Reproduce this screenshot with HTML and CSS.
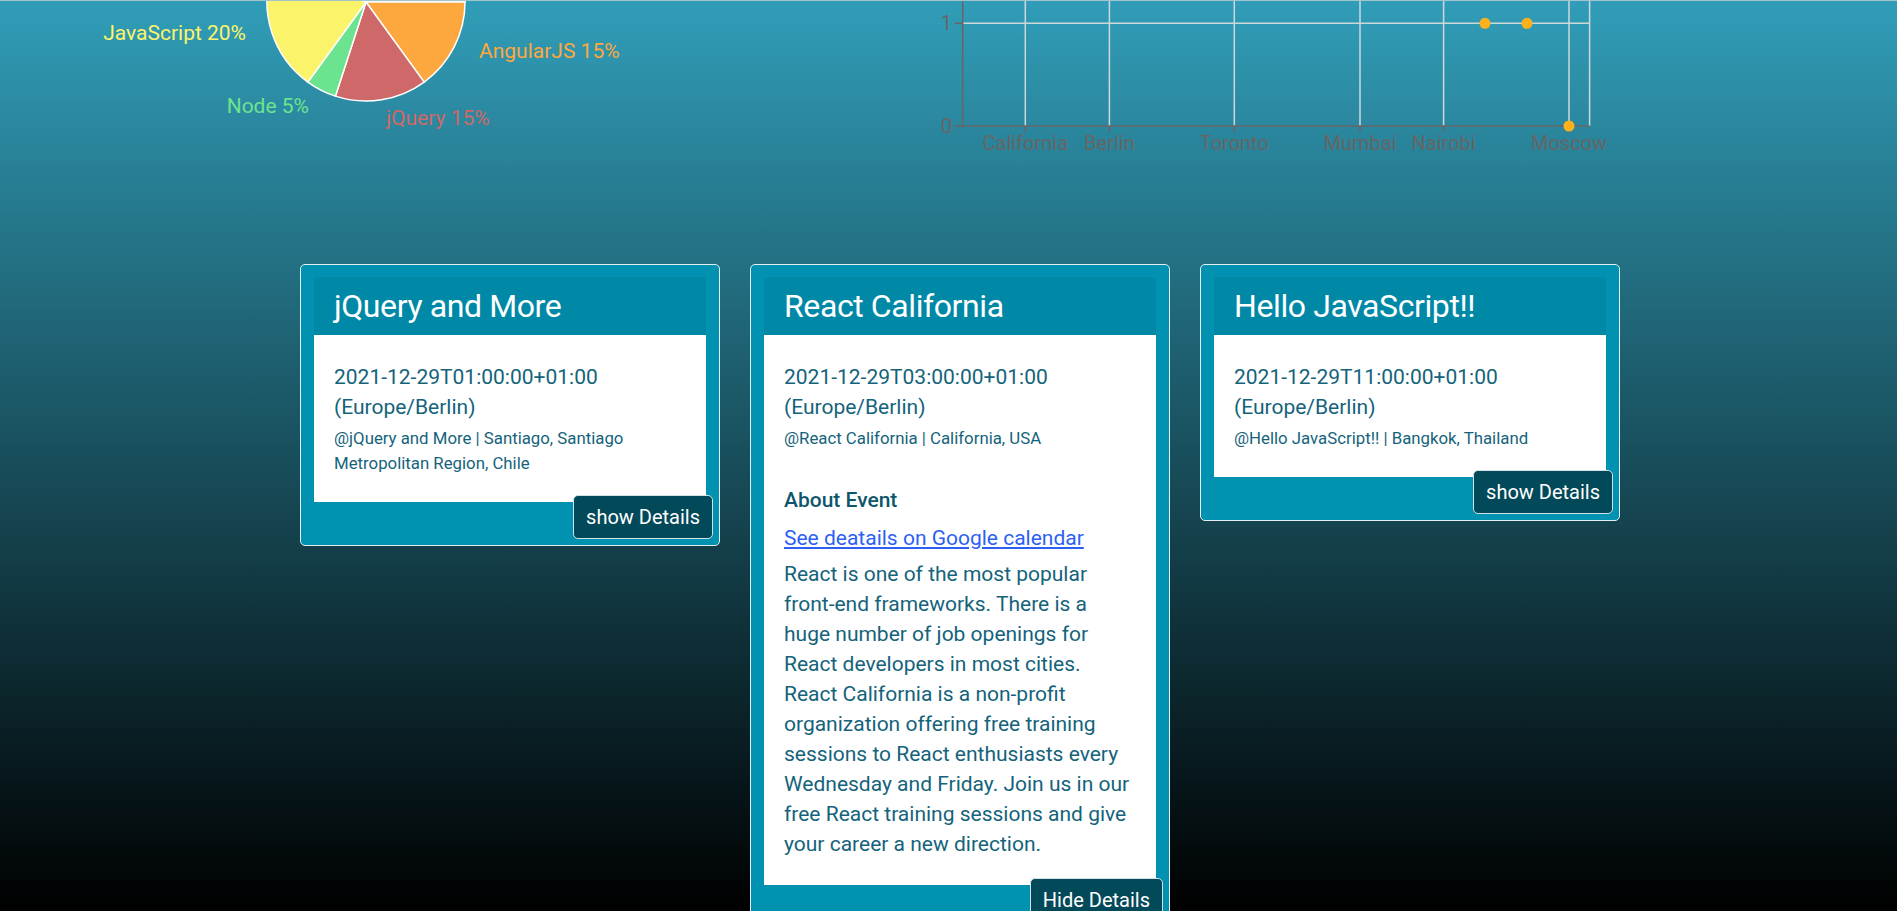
FILE: index.html
```html
<!DOCTYPE html>
<html lang="en">
<head>
<meta charset="utf-8">
<title>Meet App</title>
<link rel="stylesheet" href="styles.css">
</head>
<body>
<div class="page">
  <section class="charts">
    <svg class="pie" viewBox="0 0 900 160" width="900" height="160">
      <g class="slices">
        <path class="slice-react" d="M366,1 L271.84,-29.59 A99,99 0 0,1 465,1 Z"/>
        <path class="slice-angular" d="M366,1 L465,1 A99,99 0 0,1 424.19,81.09 Z"/>
        <path class="slice-jquery" d="M366,1 L424.19,81.09 A99,99 0 0,1 335.41,95.16 Z"/>
        <path class="slice-node" d="M366,1 L335.41,95.16 A99,99 0 0,1 307.81,81.09 Z"/>
        <path class="slice-js" d="M366,1 L307.81,81.09 A99,99 0 0,1 271.84,-29.59 Z"/>
      </g>
      <g class="pie-labels">
        <text class="lbl-js" x="246" y="39" text-anchor="end">JavaScript 20%</text>
        <text class="lbl-angular" x="479" y="57" text-anchor="start">AngularJS 15%</text>
        <text class="lbl-node" x="309" y="112" text-anchor="end">Node 5%</text>
        <text class="lbl-jquery" x="386" y="124" text-anchor="start">jQuery 15%</text>
      </g>
    </svg>
    <svg class="scatter" viewBox="0 0 720 180" width="720" height="180">
      <g class="grid">
        <line x1="62.5" y1="22.3" x2="689.6" y2="22.3"/>
        <line x1="125.3" y1="0" x2="125.3" y2="125"/>
        <line x1="209.4" y1="0" x2="209.4" y2="125"/>
        <line x1="334.3" y1="0" x2="334.3" y2="125"/>
        <line x1="460" y1="0" x2="460" y2="125"/>
        <line x1="543.6" y1="0" x2="543.6" y2="125"/>
        <line x1="669" y1="0" x2="669" y2="125"/>
        <line x1="689.6" y1="0" x2="689.6" y2="125"/>
      </g>
      <g class="axis">
        <line x1="62.7" y1="0" x2="62.7" y2="125.5"/>
        <line x1="62" y1="125" x2="689.6" y2="125"/>
        <line x1="55" y1="22.3" x2="62.7" y2="22.3"/>
        <line x1="55" y1="125" x2="62.7" y2="125"/>
        <line x1="125.3" y1="125" x2="125.3" y2="131"/>
        <line x1="209.4" y1="125" x2="209.4" y2="131"/>
        <line x1="334.3" y1="125" x2="334.3" y2="131"/>
        <line x1="460" y1="125" x2="460" y2="131"/>
        <line x1="543.6" y1="125" x2="543.6" y2="131"/>
        <line x1="669" y1="125" x2="669" y2="131"/>
      </g>
      <g class="ticks">
        <text x="52" y="29" text-anchor="end">1</text>
        <text x="52" y="132" text-anchor="end">0</text>
        <text x="125.3" y="149" text-anchor="middle">California</text>
        <text x="209.4" y="149" text-anchor="middle">Berlin</text>
        <text x="334.3" y="149" text-anchor="middle">Toronto</text>
        <text x="460" y="149" text-anchor="middle">Mumbai</text>
        <text x="543.6" y="149" text-anchor="middle">Nairobi</text>
        <text x="669" y="149" text-anchor="middle">Moscow</text>
      </g>
      <g class="dots">
        <circle cx="585" cy="22.3" r="5.5"/>
        <circle cx="627" cy="22.3" r="5.5"/>
        <circle cx="669" cy="125" r="5.5"/>
      </g>
    </svg>
  </section>

  <section class="events">
    <article class="card">
      <div class="card-inner">
        <div class="card-head"><h2 class="card-title">jQuery and More</h2></div>
        <div class="card-body">
          <p class="date">2021-12-29T01:00:00+01:00 (Europe/Berlin)</p>
          <p class="meta">@jQuery and More | Santiago, Santiago Metropolitan Region, Chile</p>
        </div>
      </div>
      <div class="card-actions"><button class="btn" type="button">show Details</button></div>
    </article>

    <article class="card">
      <div class="card-inner">
        <div class="card-head"><h2 class="card-title">React California</h2></div>
        <div class="card-body">
          <p class="date">2021-12-29T03:00:00+01:00 (Europe/Berlin)</p>
          <p class="meta">@React California | California, USA</p>
          <h3 class="about">About Event</h3>
          <p class="cal"><a class="cal-link" href="#">See deatails on Google calendar</a></p>
          <p class="description">React is one of the most popular front-end frameworks. There is a huge number of job openings for React developers in most cities. React California is a non-profit organization offering free training sessions to React enthusiasts every Wednesday and Friday. Join us in our free React training sessions and give your career a new direction.</p>
        </div>
      </div>
      <div class="card-actions"><button class="btn" type="button">Hide Details</button></div>
    </article>

    <article class="card">
      <div class="card-inner">
        <div class="card-head"><h2 class="card-title">Hello JavaScript!!</h2></div>
        <div class="card-body">
          <p class="date">2021-12-29T11:00:00+01:00 (Europe/Berlin)</p>
          <p class="meta">@Hello JavaScript!! | Bangkok, Thailand</p>
        </div>
      </div>
      <div class="card-actions"><button class="btn" type="button">show Details</button></div>
    </article>
  </section>
</div>
</body>
</html>
```

FILE: styles.css
```css
html, body {
  margin: 0;
  padding: 0;
}

body {
  font-family: Roboto, "Noto Sans", sans-serif;
}

.page {
  box-sizing: border-box;
  height: 100vh;
  overflow: hidden;
  border-top: 1px solid #a2c5cd;
  background: linear-gradient(#319db8, #000);
}

/* charts */
.charts {
  display: flex;
  height: 263px;
}

.pie {
  display: block;
  flex: none;
  width: 900px;
  height: 160px;
}

.scatter {
  display: block;
  flex: none;
  width: 720px;
  height: 180px;
}

.slices path {
  stroke: #fff;
  stroke-width: 1.5;
}

.slice-react { fill: #8884d8; }
.slice-angular { fill: #fca83f; }
.slice-jquery { fill: #cf6868; }
.slice-node { fill: #6ce38e; }
.slice-js { fill: #fbf46b; }

.pie-labels text {
  font-family: Roboto, "Noto Sans", sans-serif;
  font-size: 21px;
}

.lbl-angular { fill: #fca83f; }
.lbl-jquery { fill: #cf6868; }
.lbl-node { fill: #6ce38e; }
.lbl-js { fill: #fbf46b; }

.grid line {
  stroke: #cdd8db;
  stroke-width: 1.5;
}

.axis line {
  stroke: #666;
  stroke-width: 1.6;
}

.ticks text {
  font-family: Roboto, "Noto Sans", sans-serif;
  font-size: 20px;
  fill: #666;
}

.dots circle {
  fill: #ffb11c;
}

/* event cards */
.events {
  display: flex;
  align-items: flex-start;
  gap: 30px;
  padding-left: 300px;
}

.card {
  box-sizing: border-box;
  width: 420px;
  border: 1px solid #e6f0f2;
  border-radius: 5px;
  background: #0191b1;
  padding: 12px 13px 6px;
}

.card-head {
  background: #0088a7;
  padding: 10px 20px;
  border-radius: 4px 4px 0 0;
}

.card-title {
  margin: 0;
  font-size: 32px;
  line-height: 38px;
  font-weight: 400;
  letter-spacing: -0.4px;
  color: #fff;
}

.card-body {
  background: #fff;
  padding: 27px 20px 26px;
  color: #14637b;
}

.date {
  margin: 0 0 4px;
  font-size: 21px;
  line-height: 30px;
}

.meta {
  margin: 0;
  font-size: 16.8px;
  line-height: 24.75px;
}

.about {
  margin: 37px 0 0;
  font-size: 21px;
  line-height: 24px;
  font-weight: 500;
  color: #0f566c;
}

.cal {
  margin: 11px 0 0;
  font-size: 21px;
  line-height: 30px;
}

.cal-link {
  color: #2d5ff5;
  text-decoration: underline;
}

.description {
  margin: 6px 0 0;
  font-size: 21px;
  line-height: 30px;
}

.card-actions {
  display: flex;
  justify-content: flex-end;
  margin: -7px -7px 0 0;
}

.btn {
  box-sizing: border-box;
  height: 44px;
  padding: 0 12px;
  border: 1px solid #d4e2e6;
  border-radius: 5px;
  background: #02495a;
  color: #fff;
  font-family: Roboto, "Noto Sans", sans-serif;
  font-size: 20px;
  cursor: pointer;
}
```
